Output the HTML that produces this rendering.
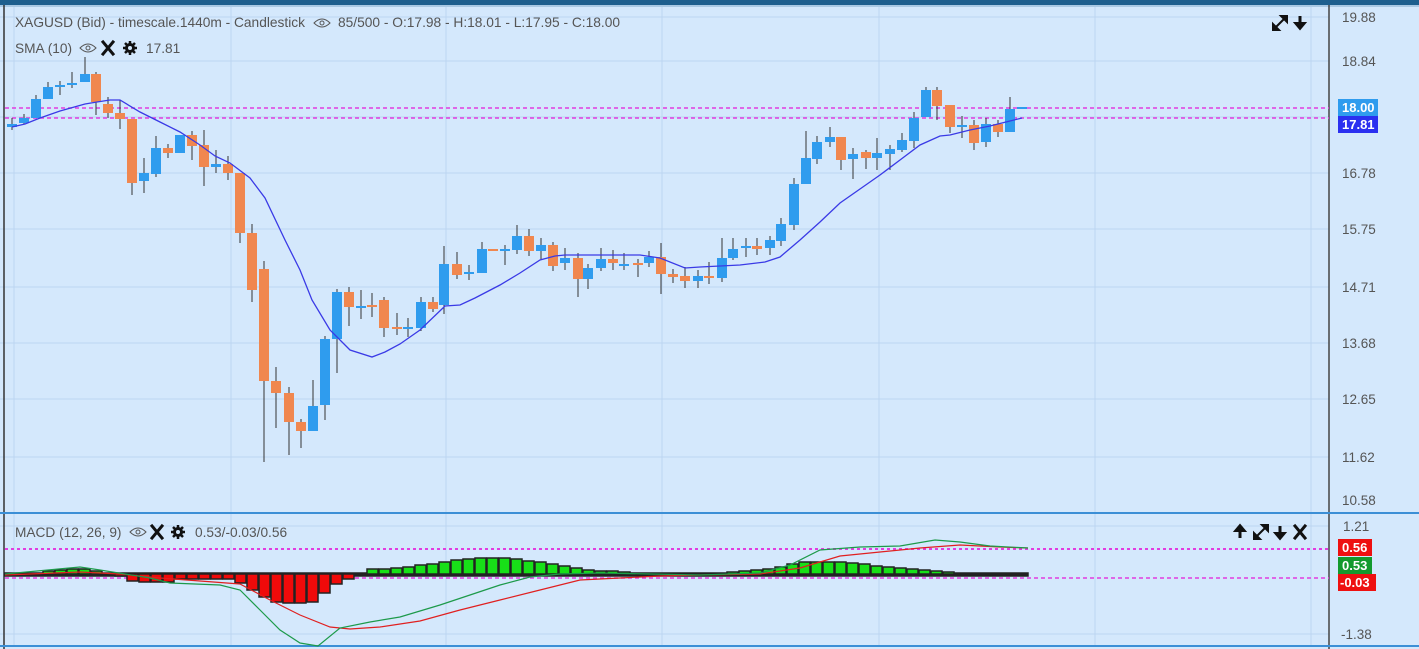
<!DOCTYPE html>
<html><head><meta charset="utf-8"><style>
body{margin:0;width:1419px;height:649px;overflow:hidden;background:#d4e8fc;font-family:"Liberation Sans",sans-serif}
svg{position:absolute;left:0;top:0}
</style></head><body>
<svg width="1419" height="649" xmlns="http://www.w3.org/2000/svg" font-family="Liberation Sans, sans-serif">
<rect width="1419" height="649" fill="#d4e8fc"/>
<rect width="1419" height="5" fill="#1e5f8e"/>
<rect x="0" y="5" width="1419" height="2" fill="#7fa9cc" opacity=".5"/>
<g stroke="#bcd6f2" stroke-width="1">
<line x1="0" y1="61" x2="1329" y2="61"/><line x1="0" y1="117" x2="1329" y2="117"/><line x1="0" y1="173" x2="1329" y2="173"/><line x1="0" y1="229" x2="1329" y2="229"/><line x1="0" y1="287" x2="1329" y2="287"/><line x1="0" y1="343" x2="1329" y2="343"/><line x1="0" y1="399" x2="1329" y2="399"/><line x1="0" y1="457" x2="1329" y2="457"/><line x1="0" y1="17" x2="1329" y2="17"/>
<line x1="0" y1="526" x2="1329" y2="526"/><line x1="0" y1="634" x2="1329" y2="634"/>
<line x1="14" y1="7" x2="14" y2="646"/><line x1="231" y1="7" x2="231" y2="646"/><line x1="446" y1="7" x2="446" y2="646"/><line x1="662" y1="7" x2="662" y2="646"/><line x1="879" y1="7" x2="879" y2="646"/><line x1="1095" y1="7" x2="1095" y2="646"/><line x1="1311" y1="7" x2="1311" y2="646"/>
</g>
<line x1="4" y1="5" x2="4" y2="649" stroke="#333" stroke-width="1.5"/>
<line x1="1329" y1="5" x2="1329" y2="649" stroke="#444" stroke-width="1.5"/>
<line x1="0" y1="513" x2="1419" y2="513" stroke="#3b8fd6" stroke-width="2"/>
<line x1="0" y1="646" x2="1419" y2="646" stroke="#3b8fd6" stroke-width="2"/>

<g font-size="13.7" fill="#555">
<text x="15" y="27" textLength="290" lengthAdjust="spacingAndGlyphs">XAGUSD (Bid) - timescale.1440m - Candlestick</text>
<text x="338" y="27" textLength="282" lengthAdjust="spacingAndGlyphs">85/500 - O:17.98 - H:18.01 - L:17.95 - C:18.00</text>
<text x="15" y="53">SMA (10)</text>
<text x="146" y="53">17.81</text>
<text x="15" y="537">MACD (12, 26, 9)</text>
<text x="195" y="537">0.53/-0.03/0.56</text>
</g>
<g fill="none" stroke="#555" stroke-width="1">
<path d="M314 23 Q322 15 330 23 Q322 31 314 23Z"/><circle cx="322" cy="23" r="2"/>
<path d="M80 48 Q88 40 96 48 Q88 56 80 48Z"/><circle cx="88" cy="48" r="2"/>
<path d="M130 532 Q138 524 146 532 Q138 540 130 532Z"/><circle cx="138" cy="532" r="2"/>
</g>
<g stroke="#111" stroke-width="3" stroke-linecap="square">
<path d="M103 42L113 54M113 42L103 54"/>
<path d="M152 526L162 538M162 526L152 538"/>
<path d="M1295 526L1305 538M1305 526L1295 538"/>
</g>
<g fill="#111">
<circle cx="130" cy="48" r="5"/><circle cx="178" cy="532" r="5"/>
</g>
<g stroke="#111" stroke-width="2.5"><path d="M130 41v14M123 48h14M125 43l10 10M135 43l-10 10"/><path d="M178 525v14M171 532h14M173 527l10 10M183 527l-10 10"/></g>
<g fill="#d4e8fc"><circle cx="130" cy="48" r="2"/><circle cx="178" cy="532" r="2"/></g>
<g stroke="#111" stroke-width="2" fill="#111">
<path d="M1276 27L1284 19"/><path d="M1273 30l0-6 6 6z"/><path d="M1287 16l0 6-6-6z"/>
<path d="M1300 16v8" stroke-width="3"/><path d="M1295 23h10l-5 6z"/>
<path d="M1240 538v-8" stroke-width="3"/><path d="M1235 531h10l-5-6z"/>
<path d="M1257 536L1265 528"/><path d="M1254 539l0-6 6 6z"/><path d="M1268 525l0 6-6-6z"/>
<path d="M1280 526v8" stroke-width="3"/><path d="M1275 533h10l-5 6z"/>
</g>

<g stroke="#e23ce0" stroke-width="1.5" stroke-dasharray="4,3">
<line x1="5" y1="108" x2="1329" y2="108"/><line x1="5" y1="118" x2="1329" y2="118"/>
<line x1="5" y1="549" x2="1329" y2="549" stroke-dasharray="3,3" stroke-width="2"/>
<line x1="5" y1="578" x2="1329" y2="578"/>
</g>

<g font-size="13.5" fill="#555">
<text x="1342" y="22">19.88</text><text x="1342" y="66">18.84</text><text x="1342" y="178">16.78</text><text x="1342" y="234">15.75</text><text x="1342" y="292">14.71</text><text x="1342" y="348">13.68</text><text x="1342" y="404">12.65</text><text x="1342" y="462">11.62</text><text x="1342" y="505">10.58</text>
<text x="1343" y="531">1.21</text><text x="1341" y="639">-1.38</text>
</g>
<rect x="1338" y="99" width="40" height="17" fill="#2f9cee"/><rect x="1338" y="116" width="40" height="17" fill="#2b30f0"/>
<rect x="1338" y="539" width="34" height="17" fill="#ee1010"/><rect x="1338" y="557" width="34" height="17" fill="#139a2d"/><rect x="1338" y="574" width="38" height="17" fill="#ee1010"/>
<g font-size="13" fill="#fff" font-weight="bold">
<text x="1342" y="112">18.00</text><text x="1342" y="129">17.81</text>
<text x="1342" y="552">0.56</text><text x="1342" y="570">0.53</text><text x="1340" y="587">-0.03</text>
</g>

<g stroke="#333" stroke-width="1">
<path d="M12 118V130M24 114V124M36 95V118M48 82V99M60 81V95M72 72V88M85 57V82M96 72V115M108 97V118M120 100V129M132 119V195M144 158V193M156 136V177M168 144V158M180 135V153M192 131V160M204 130V186M216 150V173M228 156V180M240 173V243M252 224V302M264 261V462M276 367V428M289 387V455M301 419V448M313 380V431M325 336V420M337 289V373M349 287V326M361 290V319M372 293V317M384 297V337M397 313V335M408 318V337M421 297V331M433 297V312M444 246V314M457 252V279M469 265V280M482 242V273M493 249V251M505 245V265M517 225V254M529 229V256M541 238V260M553 242V271M565 248V270M578 253V297M588 264V289M601 248V271M613 250V270M624 253V270M638 259V277M649 251V267M661 243V294M673 269V283M685 267V288M698 270V288M709 262V284M722 238V282M733 238V260M746 238V257M757 238V255M770 236V255M781 218V246M794 178V230M806 131V184M817 136V164M830 127V147M841 137V170M853 148V179M866 150V169M877 138V170M890 145V170M902 133V152M914 112V148M926 87V117M937 87V120M950 105V133M962 116V138M974 120V150M986 118V147M998 120V137M1010 97V132"/>
</g>
<g fill="#2f9cee">
<rect x="7" y="124" width="10" height="3"/><rect x="19" y="118" width="10" height="5"/><rect x="31" y="99" width="10" height="19"/><rect x="43" y="87" width="10" height="12"/><rect x="55" y="85" width="10" height="2"/><rect x="67" y="83" width="10" height="2"/><rect x="80" y="74" width="10" height="8"/>
<rect x="139" y="173" width="10" height="8"/><rect x="151" y="148" width="10" height="26"/><rect x="175" y="135" width="10" height="18"/><rect x="211" y="164" width="10" height="3"/>
<rect x="308" y="406" width="10" height="25"/><rect x="320" y="339" width="10" height="66"/><rect x="332" y="292" width="10" height="47"/><rect x="356" y="306" width="10" height="2"/><rect x="403" y="327" width="10" height="2"/><rect x="416" y="302" width="10" height="26"/><rect x="439" y="264" width="10" height="41"/><rect x="464" y="272" width="10" height="2"/><rect x="477" y="249" width="10" height="24"/><rect x="500" y="249" width="10" height="2"/><rect x="512" y="236" width="10" height="14"/><rect x="536" y="245" width="10" height="6"/><rect x="560" y="258" width="10" height="5"/><rect x="583" y="268" width="10" height="11"/><rect x="596" y="259" width="10" height="9"/><rect x="619" y="264" width="10" height="2"/><rect x="644" y="257" width="10" height="6"/>
<rect x="693" y="276" width="10" height="5"/><rect x="717" y="258" width="10" height="20"/><rect x="728" y="249" width="10" height="9"/><rect x="741" y="246" width="10" height="2"/><rect x="765" y="240" width="10" height="8"/><rect x="776" y="224" width="10" height="17"/><rect x="789" y="184" width="10" height="41"/><rect x="801" y="158" width="10" height="26"/><rect x="812" y="142" width="10" height="17"/><rect x="825" y="137" width="10" height="5"/><rect x="848" y="154" width="10" height="5"/><rect x="872" y="153" width="10" height="5"/><rect x="885" y="149" width="10" height="5"/><rect x="897" y="140" width="10" height="10"/><rect x="909" y="118" width="10" height="23"/><rect x="921" y="90" width="10" height="27"/><rect x="957" y="125" width="10" height="2"/><rect x="981" y="124" width="10" height="18"/><rect x="1005" y="109" width="10" height="23"/><rect x="1017" y="107" width="10" height="2"/>
</g>
<g fill="#f0874f">
<rect x="91" y="74" width="10" height="28"/><rect x="103" y="104" width="10" height="9"/><rect x="115" y="113" width="10" height="6"/><rect x="127" y="119" width="10" height="64"/><rect x="163" y="148" width="10" height="5"/><rect x="187" y="135" width="10" height="11"/><rect x="199" y="145" width="10" height="22"/><rect x="223" y="164" width="10" height="9"/><rect x="235" y="173" width="10" height="60"/><rect x="247" y="233" width="10" height="57"/><rect x="259" y="269" width="10" height="112"/><rect x="271" y="381" width="10" height="12"/><rect x="284" y="393" width="10" height="29"/><rect x="296" y="422" width="10" height="9"/>
<rect x="344" y="292" width="10" height="15"/><rect x="367" y="305" width="10" height="2"/><rect x="379" y="300" width="10" height="28"/><rect x="392" y="327" width="10" height="2"/><rect x="428" y="302" width="10" height="7"/><rect x="452" y="264" width="10" height="11"/><rect x="488" y="249" width="10" height="2"/><rect x="524" y="236" width="10" height="15"/><rect x="548" y="245" width="10" height="21"/><rect x="573" y="258" width="10" height="21"/><rect x="608" y="259" width="10" height="4"/><rect x="633" y="263" width="10" height="2"/><rect x="656" y="257" width="10" height="17"/><rect x="668" y="274" width="10" height="3"/><rect x="680" y="276" width="10" height="5"/><rect x="704" y="276" width="10" height="2"/><rect x="752" y="246" width="10" height="3"/>
<rect x="836" y="137" width="10" height="23"/><rect x="861" y="152" width="10" height="6"/><rect x="932" y="90" width="10" height="16"/><rect x="945" y="105" width="10" height="22"/><rect x="969" y="125" width="10" height="18"/><rect x="993" y="124" width="10" height="8"/>
</g>
<polyline fill="none" stroke="#3a3ae6" stroke-width="1.3" points="12,127 25,124 40,118 60,111 85,104 97,102 110,100 120,100 140,112 160,122 180,132 200,145 215,156 230,163 250,178 265,198 285,240 300,270 312,300 330,330 350,350 372,357 385,352 400,344 420,330 445,306 460,305 475,298 500,285 520,273 540,260 555,256 565,255 600,255 640,255 660,258 685,268 700,267 720,266 740,265 765,262 780,257 800,240 820,222 840,203 860,189 880,175 900,160 920,145 940,136 950,135 970,130 990,126 1010,121 1022,118"/>

<g stroke="#222" stroke-width="1.5">
<rect x="5" y="573" width="1023" height="3" fill="#222"/>
<g fill="#18e018">
<rect x="43" y="571" width="11" height="3"/><rect x="55" y="570" width="11" height="4"/><rect x="67" y="569" width="11" height="5"/><rect x="79" y="569" width="11" height="5"/><rect x="91" y="571" width="11" height="3"/>
<rect x="367" y="569" width="11" height="5"/><rect x="379" y="569" width="11" height="5"/><rect x="391" y="568" width="11" height="6"/><rect x="403" y="567" width="11" height="7"/><rect x="415" y="565" width="11" height="9"/><rect x="427" y="564" width="11" height="10"/><rect x="439" y="562" width="11" height="12"/><rect x="451" y="560" width="11" height="14"/><rect x="463" y="559" width="11" height="15"/><rect x="475" y="558" width="11" height="16"/><rect x="487" y="558" width="11" height="16"/><rect x="499" y="558" width="11" height="16"/><rect x="511" y="559" width="11" height="15"/><rect x="523" y="561" width="11" height="13"/><rect x="535" y="562" width="11" height="12"/><rect x="547" y="564" width="11" height="10"/><rect x="559" y="566" width="11" height="8"/><rect x="571" y="568" width="11" height="6"/><rect x="583" y="570" width="11" height="4"/><rect x="595" y="571" width="11" height="3"/><rect x="607" y="571" width="11" height="3"/><rect x="619" y="572" width="11" height="2"/>
<rect x="727" y="572" width="11" height="2"/><rect x="739" y="571" width="11" height="3"/><rect x="751" y="570" width="11" height="4"/><rect x="763" y="569" width="11" height="5"/><rect x="775" y="567" width="11" height="7"/><rect x="787" y="564" width="11" height="10"/><rect x="799" y="562" width="11" height="12"/><rect x="811" y="562" width="11" height="12"/><rect x="823" y="562" width="11" height="12"/><rect x="835" y="562" width="11" height="12"/><rect x="847" y="563" width="11" height="11"/><rect x="859" y="564" width="11" height="10"/><rect x="871" y="566" width="11" height="8"/><rect x="883" y="567" width="11" height="7"/><rect x="895" y="568" width="11" height="6"/><rect x="907" y="569" width="11" height="5"/><rect x="919" y="570" width="11" height="4"/><rect x="931" y="571" width="11" height="3"/><rect x="943" y="572" width="11" height="2"/>
</g>
<g fill="#f00a0a">
<rect x="115" y="574" width="11" height="2"/><rect x="127" y="574" width="11" height="7"/><rect x="139" y="574" width="11" height="8"/><rect x="151" y="574" width="11" height="8"/><rect x="163" y="574" width="11" height="8"/><rect x="175" y="574" width="11" height="5"/><rect x="187" y="574" width="11" height="5"/><rect x="199" y="574" width="11" height="5"/><rect x="211" y="574" width="11" height="5"/><rect x="223" y="574" width="11" height="5"/><rect x="235" y="574" width="11" height="9"/><rect x="247" y="574" width="11" height="16"/><rect x="259" y="574" width="11" height="23"/><rect x="271" y="574" width="11" height="28"/><rect x="283" y="574" width="11" height="29"/><rect x="295" y="574" width="11" height="29"/><rect x="307" y="574" width="11" height="28"/><rect x="319" y="574" width="11" height="19"/><rect x="331" y="574" width="11" height="10"/><rect x="343" y="574" width="11" height="5"/>
</g>
</g>
<polyline fill="none" stroke="#e02020" stroke-width="1.2" points="5,575 80,572 120,574 160,578 200,581 240,584 270,600 300,615 330,627 350,629 380,627 420,621 460,610 500,600 540,590 580,580 620,578 660,576 700,575 760,574 800,568 840,556 880,552 920,548 960,545 1000,547 1028,548"/>
<polyline fill="none" stroke="#1d9a4a" stroke-width="1.2" points="5,574 80,567 100,570 150,578 170,583 220,585 240,590 260,610 280,630 300,643 318,646 340,628 370,622 400,617 440,605 470,595 500,585 530,577 560,574 600,573 650,574 700,575 760,573 790,565 820,550 860,547 900,546 935,540 960,542 990,546 1028,548"/>
</svg>
</body></html>
